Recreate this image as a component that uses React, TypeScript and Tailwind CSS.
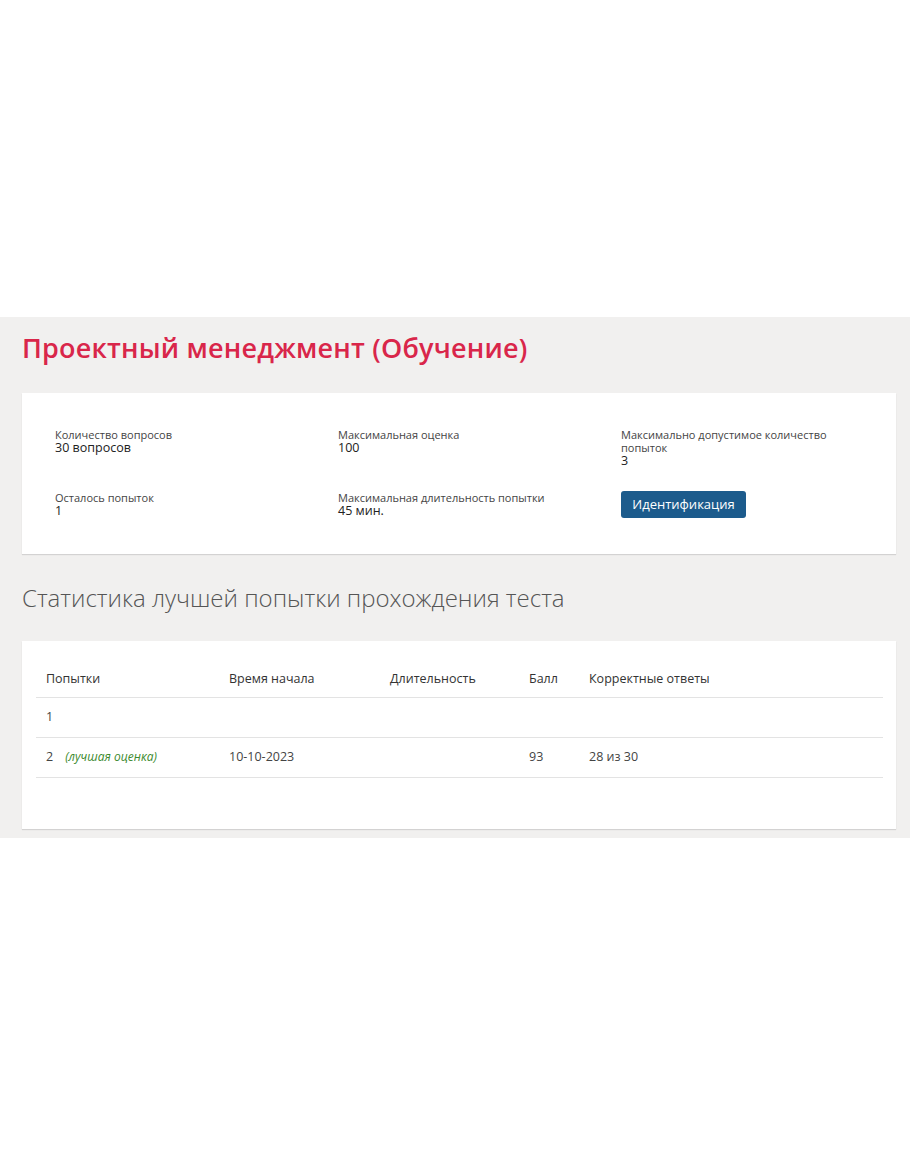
import React from "react";

const font = { fontFamily: '"Open Sans", "Noto Sans", sans-serif' };

function Info({ label, value, labelClass = "" }: { label: string; value: string; labelClass?: string }) {
  return (
    <div className="flex flex-col">
      <div className={`text-[11px] leading-[13px] text-[#444] ${labelClass}`}>{label}</div>
      <div className="text-[12.5px] leading-[14px] text-[#222]">{value}</div>
    </div>
  );
}

export default function App() {
  const rows = [
    { n: "1", best: false, start: "", dur: "", score: "", correct: "" },
    { n: "2", best: true, start: "10-10-2023", dur: "", score: "93", correct: "28 из 30" },
  ];
  return (
    <div className="min-h-[1155px] w-full bg-white" style={font}>
      <div className="h-[317px]" />
      <div className="bg-[#f1f0ef] pl-[22px] pr-[14px] pt-[13px] pb-[9px]">
        <h1 className="text-[27px] leading-[36px] font-semibold text-[#d9264a] tracking-[0.2px]">
          Проектный менеджмент (Обучение)
        </h1>
        <div className="mt-[27px] bg-white shadow-[0_1px_1px_rgba(0,0,0,0.12)] pl-[33px] pr-[33px] pt-[35px] pb-[36px]">
          <div className="grid grid-cols-[283px_283px_1fr] gap-y-[23px]">
            <Info label="Количество вопросов" value="30 вопросов" />
            <Info label="Максимальная оценка" value="100" />
            <Info label="Максимально допустимое количество попыток" value="3" labelClass="max-w-[215px]" />
            <Info label="Осталось попыток" value="1" />
            <Info label="Максимальная длительность попытки" value="45 мин." />
            <div>
              <button className="h-[27px] w-[125px] rounded-[3px] bg-[#1c5b8c] text-[13px] text-white">
                Идентификация
              </button>
            </div>
          </div>
        </div>
        <h2 className="mt-[29px] text-[24px] leading-[30px] font-light text-[#555]">
          Статистика лучшей попытки прохождения теста
        </h2>
        <div className="mt-[28px] bg-white shadow-[0_1px_1px_rgba(0,0,0,0.12)] pl-[14px] pr-[13px] pt-[20px] pb-[51px]">
          <table className="w-full border-collapse text-[12.5px] text-[#333]">
            <thead>
              <tr className="h-[36px] border-b border-[#e3e3e3] text-left">
                <th className="w-[183px] px-[10px] font-normal text-[#333]">Попытки</th>
                <th className="w-[161px] px-[10px] font-normal text-[#333]">Время начала</th>
                <th className="w-[139px] px-[10px] font-normal text-[#333]">Длительность</th>
                <th className="w-[60px] px-[10px] font-normal text-[#333]">Балл</th>
                <th className="px-[10px] font-normal text-[#333]">Корректные ответы</th>
              </tr>
            </thead>
            <tbody>
              {rows.map((r) => (
                <tr key={r.n} className="h-[40px] border-b border-[#e3e3e3]">
                  <td className="px-[10px] text-[#444]">
                    {r.n}
                    {r.best && <span className="ml-[12px] italic text-[12px] text-[#3c8a2e]">(лучшая оценка)</span>}
                  </td>
                  <td className="px-[10px] text-[#444]">{r.start}</td>
                  <td className="px-[10px] text-[#444]">{r.dur}</td>
                  <td className="px-[10px] text-[#444]">{r.score}</td>
                  <td className="px-[10px] text-[#444]">{r.correct}</td>
                </tr>
              ))}
            </tbody>
          </table>
        </div>
      </div>
    </div>
  );
}
